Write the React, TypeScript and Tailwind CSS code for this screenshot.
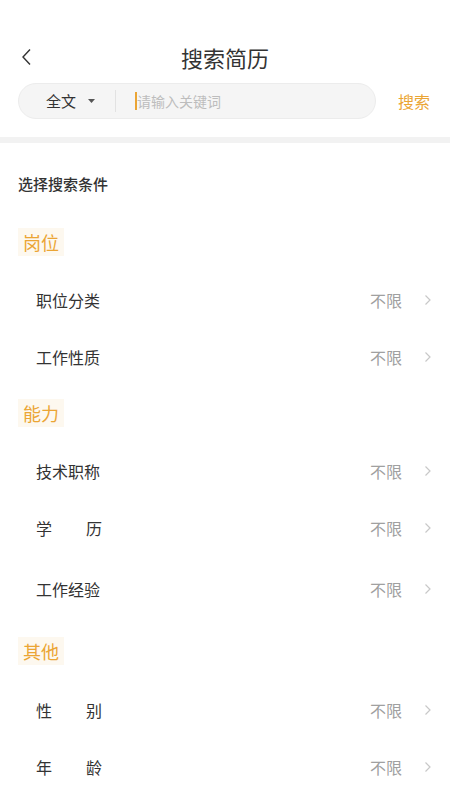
import React from 'react';

const font = { fontFamily: '"Noto Sans CJK SC", "Noto Sans", sans-serif' };

type Row = { label: React.ReactNode; h: string };

const Chevron = () => (
    <svg width="8" height="12" viewBox="0 0 8 12" fill="none" className="ml-[22px]">
        <path d="M1.5 1.5 L6 6 L1.5 10.5" stroke="#c8c8c8" strokeWidth="1.2" />
    </svg>
);

const SectionLabel = ({ text, mt }: { text: string; mt: string }) => (
    <div className={`${mt} flex`}>
        <div className="h-[28px] px-[5px] flex items-center bg-[#fdf8ef] text-[18px] text-[#eba534] leading-none">
            {text}
        </div>
    </div>
);

const FilterRow = ({ row }: { row: Row }) => (
    <div className={`${row.h} flex items-center pl-[18px]`}>
        <div className="flex-1 text-[16px] text-[#333333]">{row.label}</div>
        <span className="text-[16px] text-[#a0a0a0]">不限</span>
        <Chevron />
    </div>
);

const Spaced = ({ a, b }: { a: string; b: string }) => (
    <span className="inline-flex w-[66px] justify-between">
        <span>{a}</span>
        <span>{b}</span>
    </span>
);

export default function App() {
    return (
        <div className="w-[450px] h-[800px] bg-white overflow-hidden" style={font}>
            {/* nav */}
            <div className="mt-[34px] h-[46px] relative flex items-center justify-center">
                <svg width="12" height="18" viewBox="0 0 12 18" fill="none" className="absolute left-[20px] top-[14px]">
                    <path d="M10 1.5 L3 9 L10 16.5" stroke="#333" strokeWidth="1.4" />
                </svg>
                <span className="text-[22px] text-[#333333]">搜索简历</span>
            </div>

            {/* search bar */}
            <div className="mt-[3px] flex items-center pl-[18px] pr-[20px]">
                <div className="w-[358px] h-[36px] rounded-full bg-[#f5f5f5] border border-[#ececec] flex items-center">
                    <div className="w-[96px] flex items-center gap-[12px] text-[15px] text-[#333333]">
                        <span className="ml-[27px]">全文</span>
                        <svg width="7" height="4" viewBox="0 0 7 4">
                            <path d="M0 0 H7 L3.5 4 Z" fill="#555" />
                        </svg>
                    </div>
                    <div className="w-px h-[22px] bg-[#e2e2e2]" />
                    <div className="ml-[19px] w-[2px] h-[18px] bg-[#eba534]" />
                    <span className="text-[14px] text-[#bdbdbd]">请输入关键词</span>
                </div>
                <span className="ml-auto text-[16px] text-[#eba534]">搜索</span>
            </div>

            <div className="mt-[18px] h-[6px] bg-[#f2f2f2]" />

            <div className="px-[18px]">
                <div className="pt-[32px] text-[15px] leading-[18px] font-medium text-[#333333]">选择搜索条件</div>

                <SectionLabel text="岗位" mt="mt-[35px]" />
                <div className="mt-[15px]">
                    <FilterRow row={{ label: '职位分类', h: 'h-[57px]' }} />
                    <FilterRow row={{ label: '工作性质', h: 'h-[57px]' }} />
                </div>

                <SectionLabel text="能力" mt="mt-[14px]" />
                <div className="mt-[15px]">
                    <FilterRow row={{ label: '技术职称', h: 'h-[57px]' }} />
                    <FilterRow row={{ label: <Spaced a="学" b="历" />, h: 'h-[57px]' }} />
                    <FilterRow row={{ label: '工作经验', h: 'h-[66px]' }} />
                </div>

                <SectionLabel text="其他" mt="mt-[15px]" />
                <div className="mt-[16px]">
                    <FilterRow row={{ label: <Spaced a="性" b="别" />, h: 'h-[57px]' }} />
                    <FilterRow row={{ label: <Spaced a="年" b="龄" />, h: 'h-[57px]' }} />
                </div>
            </div>
        </div>
    );
}
